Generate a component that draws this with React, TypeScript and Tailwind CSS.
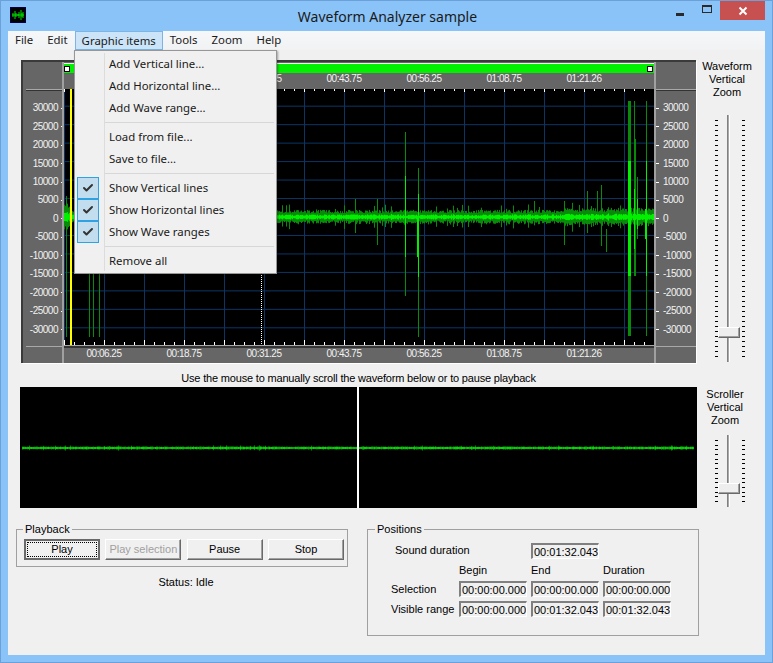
import { Check } from "lucide-react";

const mainFont = "font-['Liberation_Sans',Arial,sans-serif]";
const menuFont = "font-['Noto_Sans',sans-serif]";

const yLabels = ["30000", "25000", "20000", "15000", "10000", "5000", "0", "-5000", "-10000", "-15000", "-20000", "-25000", "-30000"];
const timeLabels = ["00:06.25", "00:18.75", "00:31.25", "00:43.75", "00:56.25", "01:08.75", "01:21.26"];

// small seeded random so the noise is the same on every load
function makeRandom(seed: number) {
  let s = seed;
  return () => {
    s = (s * 16807) % 2147483647;
    return (s - 1) / 2147483646;
  };
}

type Spike = [number, number, number];

// [x, top, bottom] in plot coordinates
const darkSpikes: Spike[] = [
  [2, 107, 248], [25, 150, 248], [29, 150, 248], [35, 150, 248],
  [291, 110, 144], [313, 110, 156], [341, 43, 207], [354, 79, 248],
  [470, 112, 135], [475, 118, 135], [500, 112, 156], [523, 102, 144],
  [533, 102, 135], [537, 96, 157], [542, 140, 163],
  [561, 120, 135], [564, 12, 247], [565, 12, 247], [566, 12, 247], [570, 12, 187], [571, 50, 187],
  [573, 88, 150], [582, 12, 247],
];
const brightSpikes: Spike[] = [
  [341, 87, 168], [354, 105, 188], [353, 128, 168], [564, 72, 187], [565, 72, 187],
  [566, 72, 187], [570, 100, 160], [573, 110, 140], [582, 72, 187], [581, 120, 150],
];

function buildWave(width: number, mid: number, seed: number, dark: number, bright: number, peak: number) {
  const rnd = makeRandom(seed);
  let darkPath = "";
  let brightPath = "";
  for (let x = 0; x < width; x++) {
    const boost = rnd() > 0.93 ? peak : 1;
    const edge = width < 600 && x < 8 ? 2 : width < 600 && x >= 500 ? 1.3 : 1;
    const d = (dark * 0.6 + rnd() * dark * 0.5) * boost * edge;
    const b = (bright * 0.4 + rnd() * bright * 0.6) * (boost > 1 ? 1.2 : 1) * edge;
    darkPath += `M${x + 0.5} ${(mid - d).toFixed(1)}V${(mid + d * (0.8 + rnd() * 0.3)).toFixed(1)}`;
    brightPath += `M${x + 0.5} ${(mid - b).toFixed(1)}V${(mid + b).toFixed(1)}`;
  }
  return { darkPath, brightPath };
}

const plotWave = buildWave(590, 128, 4711, 6.5, 2.6, 1.8);
const scrollWave = buildWave(672, 61, 911, 1.5, 1, 1.6);

function Plot() {
  const hLines = yLabels.map((_, i) => 128 + (i - 6) * 18.47);
  const vLines = [0, 40, 80, 120, 160, 200, 240, 280, 320, 360, 400, 440, 480, 520, 560];
  const ticks = Array.from({ length: 59 }, (_, i) => i * 10);
  return (
    <svg width="590" height="256" viewBox="0 0 590 256" className="block bg-black">
      {hLines.map((y) => (
        <line key={y} x1="0" x2="590" y1={y} y2={y} stroke="#0c3566" />
      ))}
      {vLines.map((x) => (
        <line key={x} x1={x + 0.5} x2={x + 0.5} y1="0" y2="256" stroke="#0c3566" />
      ))}
      <path d={plotWave.darkPath} stroke="#0a8a0a" fill="none" />
      {darkSpikes.map(([x, a, b], i) => (
        <line key={i} x1={x + 0.5} x2={x + 0.5} y1={a} y2={b} stroke="#0a8a0a" />
      ))}
      <path d={plotWave.brightPath} stroke="#00f000" fill="none" />
      {brightSpikes.map(([x, a, b], i) => (
        <line key={i} x1={x + 0.5} x2={x + 0.5} y1={a} y2={b} stroke="#00f000" />
      ))}
      <rect x="6" y="0" width="2" height="256" fill="#ffff00" />
      <line x1="197.5" x2="197.5" y1="0" y2="256" stroke="#fff" strokeDasharray="1 1" />
      {ticks.map((x) => (
        <g key={x} stroke="#fff">
          <line x1={x + 0.5} x2={x + 0.5} y1="0" y2={x % 40 === 0 ? 3 : 2} />
          <line x1={x + 0.5} x2={x + 0.5} y1={x % 40 === 0 ? 251 : 253} y2="256" />
        </g>
      ))}
    </svg>
  );
}

function Ruler({ side }: { side: "left" | "right" }) {
  const left = side === "left";
  return (
    <div className={`flex flex-col ${left ? "w-[41px]" : "w-[40px]"}`}>
      <div className={`h-[28px] border-b border-[#a8a8a8] ${left ? "ml-[3px]" : ""}`} />
      <div className={`h-[257px] border-t border-[#333333] ${left ? "ml-[3px]" : ""}`}>
        <div className="pt-[8px]">
          {yLabels.map((v) => (
            <div key={v} className={`flex h-[18.47px] items-center ${left ? "justify-end" : ""} text-[10px] leading-none tracking-[-0.5px] text-[#f2f2f2]`}>
              {!left && <span className="mr-[4px] h-px w-[3px] bg-white" />}
              <span>{v}</span>
              {left && <span className="ml-[3px] h-px w-[3px] bg-white" />}
            </div>
          ))}
        </div>
      </div>
      <div className={`h-[17px] border-t border-[#a8a8a8] ${left ? "ml-[3px]" : ""}`} />
    </div>
  );
}

function Waveform() {
  return (
    <div className="flex h-[303px] w-[675px] border-t-2 border-l-2 border-[#3a3a3a] bg-[#666666] shadow-[1px_1px_0_#ffffff]">
      <Ruler side="left" />
      <div className="-ml-[2px] flex w-[594px] flex-col border-x-2 border-[#a0a0a0]">
        <div className="h-[27px]">
          <div className="relative mt-[1px] h-[10px] border-t border-[#f4f4f4] bg-[#00f000]">
            <span className="absolute top-[2px] left-0 h-[6px] w-[6px] border border-black bg-white" />
            <span className="absolute top-[2px] right-[1px] h-[6px] w-[6px] border border-black bg-white" />
          </div>
          <div className="flex text-[10px] leading-[12px] tracking-[-0.5px] text-[#f2f2f2]">
            {timeLabels.map((t) => (
              <span key={t} className="w-[80px] text-center">{t}</span>
            ))}
          </div>
        </div>
        <Plot />
        <div className="border-t border-[#a8a8a8] bg-[#666666]">
          <div className="flex border-t-2 border-[#333333] text-[10px] leading-[12px] tracking-[-0.5px] text-[#f2f2f2]">
            {timeLabels.map((t) => (
              <span key={t} className="w-[80px] text-center">{t}</span>
            ))}
          </div>
        </div>
      </div>
      <Ruler side="right" />
    </div>
  );
}

function Slider({ height, ticks, thumbTop }: { height: number; ticks: number; thumbTop: number }) {
  const marks = Array.from({ length: ticks }, (_, i) => i);
  const column = (
    <div className="flex flex-col justify-between py-[5px]" style={{ height }}>
      {marks.map((i) => (
        <span key={i} className="h-px w-[3px] bg-black" />
      ))}
    </div>
  );
  return (
    <div className="relative flex w-[30px] justify-between" style={{ height }}>
      {column}
      <div className="relative mr-[3px] flex justify-center">
        <div className="h-full w-[3px] border-l border-[#808080] border-r border-r-white bg-[#a8a8a8]" />
        <div
          className="absolute -left-[9px] h-[11px] w-[22px] border border-t-white border-l-white border-r-[#696969] border-b-[#696969] bg-[#eeeeee] shadow-[inset_-1px_-1px_0_#a0a0a0]"
          style={{ top: thumbTop }}
        />
      </div>
      {column}
    </div>
  );
}

function AppIcon() {
  return (
    <svg width="16" height="16" viewBox="0 0 16 16" className="block">
      <rect width="16" height="16" fill="#000" stroke="#000080" />
      <path d="M2 8H14M3 6V10M5 4V12M6 6V10M8 7V9M9 5V11M11 3V13M12 6V10M13 5V11" stroke="#00e000" />
    </svg>
  );
}

function TitleBar() {
  return (
    <div className="grid h-[30px] grid-cols-[1fr_auto_1fr] items-start pl-[2px]">
      <div className="pt-[6px]">
        <AppIcon />
      </div>
      <div className={`${menuFont} pt-[5px] text-[14px] leading-[21px] text-[#1a1a1a]`}>Waveform Analyzer sample</div>
      <div className="flex justify-end">
        <div className="flex h-[19px] w-[27px] items-center justify-center pt-[8px]">
          <span className="h-[3px] w-[8px] bg-[#2a2a2a]" />
        </div>
        <div className="flex h-[19px] w-[27px] items-center justify-center pb-[4px]">
          <span className="h-[8px] w-[10px] border border-t-2 border-[#2a2a2a]" />
        </div>
        <div className="flex h-[19px] w-[45px] items-center justify-center bg-[#c75050]">
          <svg width="10" height="10" viewBox="0 0 10 10">
            <path d="M1.5 1.5L8.5 8.5M8.5 1.5L1.5 8.5" stroke="#fff" strokeWidth="2" />
          </svg>
        </div>
      </div>
    </div>
  );
}

function MenuItem({ label, checked }: { label: string; checked?: boolean }) {
  return (
    <div className="flex h-[22px] items-center pl-[2px]">
      <div className="flex h-[22px] w-[22px] items-center justify-center">
        {checked && (
          <div className="flex h-[22px] w-[22px] items-center justify-center border border-[#2ea2e2] bg-[#c2deee]">
            <Check size={12} strokeWidth={4} className="text-[#333333]" />
          </div>
        )}
      </div>
      <span className="pl-[10px]">{label}</span>
    </div>
  );
}

function MenuSep({ h }: { h: string }) {
  return (
    <div className={`flex ${h} items-center pr-[2px] pl-[30px]`}>
      <span className="h-px w-full bg-[#d7d7d7]" />
    </div>
  );
}

function GraphicMenu() {
  return (
    <div className={`${menuFont} absolute top-[19px] left-[66px] z-10 h-[224px] w-[203px] border border-[#979797] bg-[#f0f0f0] pt-[2px] text-[11.4px] text-[#1a1a1a] shadow-[1px_1px_2px_rgba(0,0,0,0.35)]`}>
      <span className="absolute top-[2px] bottom-[2px] left-[29px] w-px bg-[#dcdcdc]" />
      <MenuItem label="Add Vertical line..." />
      <MenuItem label="Add Horizontal line..." />
      <MenuItem label="Add Wave range..." />
      <MenuSep h="h-[7px]" />
      <MenuItem label="Load from file..." />
      <MenuItem label="Save to file..." />
      <MenuSep h="h-[7px]" />
      <MenuItem label="Show Vertical lines" checked />
      <MenuItem label="Show Horizontal lines" checked />
      <MenuItem label="Show Wave ranges" checked />
      <MenuSep h="h-[7px]" />
      <MenuItem label="Remove all" />
    </div>
  );
}

function MenuBar() {
  const items = ["File", "Edit", "Graphic items", "Tools", "Zoom", "Help"];
  return (
    <div className={`${menuFont} flex h-[19px] bg-gradient-to-b from-[#f6f7f9] to-[#f1f2f4] text-[11.4px] leading-[18px] text-[#1a1a1a]`}>
      {items.map((m) => (
        <div
          key={m}
          className={m === "Graphic items" ? "border border-[#7db4e4] bg-[#cce4f7] px-[6px]" : "px-[7px]"}
        >
          {m}
        </div>
      ))}
    </div>
  );
}

function Button({ label, state }: { label: string; state?: "default" | "disabled" }) {
  if (state === "default") {
    return (
      <button className="flex h-[21px] w-[76px] items-center justify-center border-2 border-[#696969] bg-[#f0f0f0] p-[1px]">
        <span className="flex h-full w-full items-center justify-center border border-dotted border-black">{label}</span>
      </button>
    );
  }
  return (
    <button
      className={`h-[21px] w-[76px] border border-t-white border-l-white border-r-[#696969] border-b-[#696969] bg-[#f0f0f0] shadow-[inset_-1px_-1px_0_#a0a0a0] ${state === "disabled" ? "text-[#a0a0a0]" : ""}`}
    >
      {label}
    </button>
  );
}

function TimeField({ value }: { value: string }) {
  return (
    <div className="h-[16px] overflow-hidden border-t-2 border-l-2 border-b border-r border-t-[#808080] border-l-[#808080] border-b-white border-r-white pl-[1px] leading-[14px] whitespace-nowrap">
      {value}
    </div>
  );
}

function PositionsRow({ label, values }: { label: string; values: string[] }) {
  return (
    <>
      <div className="pt-[1px] leading-[14px] whitespace-nowrap">{label}</div>
      {values.map((v, i) => (
        <TimeField key={i} value={v} />
      ))}
    </>
  );
}

export default function App() {
  return (
    <div className={`${mainFont} flex h-[663px] w-[773px] flex-col overflow-hidden border border-[#6ba0d8] bg-[#8ac3f8] px-[7px] pb-[7px] text-[11px] text-black`}>
      <TitleBar />
      <div className="relative flex h-[624px] w-[757px] flex-col bg-[#f0f0f0]">
        <MenuBar />
        <GraphicMenu />

        <div className="flex pt-[10px] pl-[13px]">
          <Waveform />
          <div className="flex w-[62px] flex-col">
            <div className="text-center leading-[13px]">
              Waveform
              <br />
              Vertical
              <br />
              Zoom
            </div>
            <div className="mt-[16px] ml-[19px]">
              <Slider height={247} ticks={48} thumbTop={212} />
            </div>
          </div>
        </div>

        <div className="flex pl-[12px]">
          <div className="w-[677px]">
            <div className="h-[24px] pt-[8px] text-center text-[11px] leading-[14px] tracking-[-0.18px]">
              Use the mouse to manually scroll the waveform below or to pause playback
            </div>
            <svg width="677" height="121" viewBox="0 0 677 121" className="block bg-black">
              <g transform="translate(2 0)">
                <path d={scrollWave.darkPath} stroke="#0a8a0a" fill="none" />
                <path d={scrollWave.brightPath} stroke="#00e000" fill="none" />
              </g>
              <rect x="337" y="0" width="2" height="121" fill="#fff" />
            </svg>
          </div>
          <div className="flex w-[60px] flex-col pt-[25px]">
            <div className="pr-[4px] text-center leading-[13px]">
              Scroller
              <br />
              Vertical
              <br />
              Zoom
            </div>
            <div className="mt-[8px] ml-[18px]">
              <Slider height={72} ticks={14} thumbTop={48} />
            </div>
          </div>
        </div>

        <div className="flex items-start pt-[14px] pl-[8px]">
          <div className="w-[332px]">
            <fieldset className="border border-[#a0a0a0] pt-[3px] pr-[3px] pb-[6px] pl-[7px]">
              <legend className="-ml-[1px] px-[2px] leading-[14px]">Playback</legend>
              <div className="flex justify-between">
                <Button label="Play" state="default" />
                <Button label="Play selection" state="disabled" />
                <Button label="Pause" />
                <Button label="Stop" />
              </div>
            </fieldset>
            <div className="pt-[8px] pl-[8px] text-center leading-[14px]">Status: Idle</div>
          </div>

          <fieldset className="ml-[19px] w-[332px] border border-[#a0a0a0] pt-[7px] pr-[27px] pb-[18px] pl-[23px]">
            <legend className="-ml-[16px] px-[2px] leading-[14px]">Positions</legend>
            <div className="grid grid-cols-[64px_68px_68px_68px] gap-x-[4px] gap-y-[4px]">
              <div className="col-span-2 pl-[4px] leading-[14px]">Sound duration</div>
              <TimeField value="00:01:32.043" />
              <div />
              <div />
              <div className="leading-[14px]">Begin</div>
              <div className="leading-[14px]">End</div>
              <div className="leading-[14px]">Duration</div>
              <PositionsRow label="Selection" values={["00:00:00.000", "00:00:00.000", "00:00:00.000"]} />
              <PositionsRow label="Visible range" values={["00:00:00.000", "00:01:32.043", "00:01:32.043"]} />
            </div>
          </fieldset>
        </div>
      </div>
    </div>
  );
}
